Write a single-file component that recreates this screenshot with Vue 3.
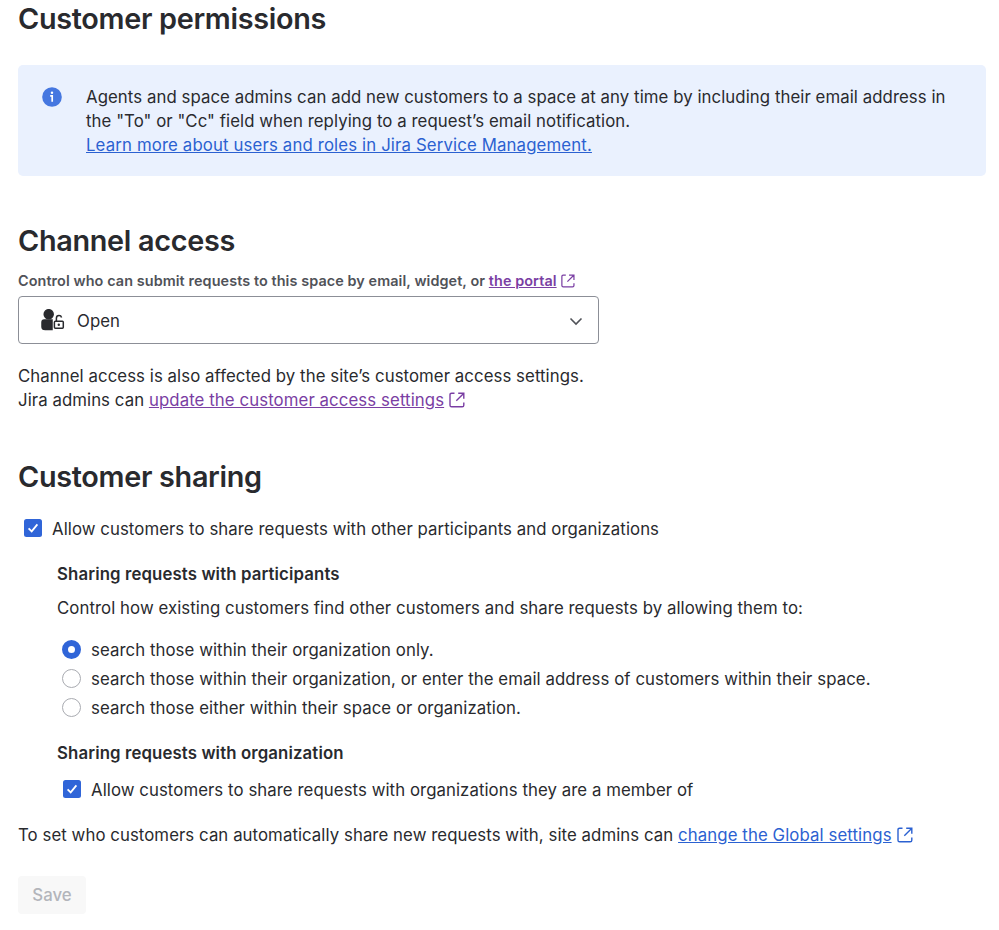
<template>
  <main class="permissions-page">
    <h2>Customer permissions</h2>

    <section class="info-message">
      <svg class="info-icon" viewBox="0 0 20 20">
        <circle cx="10" cy="10" r="9.8" fill="#4577e0" />
        <circle cx="10" cy="5.7" r="1.2" fill="#fff" />
        <path d="M8.2 8.9H10.2V14.8" fill="none" stroke="#fff" stroke-width="1.7" />
      </svg>
      <div class="info-content">
        <p>
          Agents and space admins can add new customers to a space at any time by including their email address in
          the "To" or "Cc" field when replying to a request’s email notification.
        </p>
        <a href="#" class="learn-more">Learn more about users and roles in Jira Service Management.</a>
      </div>
    </section>

    <!-- Channel access -->
    <section class="channel-access">
      <h2>Channel access</h2>
      <div class="field-label">
        Control who can submit requests to this space by email, widget, or
        <a href="#" class="visited">the portal</a>
        <svg class="external small visited" viewBox="0 0 16 16">
          <path :d="externalPath" />
        </svg>
      </div>
      <div class="select" role="combobox">
        <svg class="access-icon" viewBox="0 0 24 22">
          <circle cx="7.7" cy="5.2" r="4.5" fill="#292a2e" />
          <path d="M1 13.3Q1 11 3.3 11H11V20.5H4.2Q1 20.5 1 17.7Z" fill="#292a2e" />
          <rect x="13.4" y="12.3" width="8.9" height="6.9" rx="0.9" />
          <path d="M15.4 12V9.2Q15.4 6.6 18 6.6Q20 6.6 20.6 8.4" />
          <circle cx="17.8" cy="15.7" r="1.2" fill="#292a2e" stroke="none" />
        </svg>
        <span>{{ channelAccess }}</span>
        <svg class="chevron" viewBox="0 0 14 14">
          <path d="M1.5 4.5L7 10L12.5 4.5" />
        </svg>
      </div>
      <p class="access-note">
        Channel access is also affected by the site’s customer access settings.<br />
        Jira admins can
        <a href="#" class="visited">update the customer access settings</a>
        <svg class="external visited" viewBox="0 0 16 16">
          <path :d="externalPath" />
        </svg>
      </p>
    </section>

    <!-- Customer sharing -->
    <section class="customer-sharing">
      <h2>Customer sharing</h2>
      <label class="option">
        <input v-model="allowSharing" type="checkbox" />
        <svg class="box" viewBox="0 0 18 18">
          <path v-if="allowSharing" d="M4.6 9.3L7.7 12.4L13.4 5.4" />
        </svg>
        <span>Allow customers to share requests with other participants and organizations</span>
      </label>

      <div class="sharing-details">
        <h3>Sharing requests with participants</h3>
        <p>Control how existing customers find other customers and share requests by allowing them to:</p>
        <div class="radio-group">
          <label v-for="option in searchOptions" :key="option.value" class="option">
            <input v-model="searchScope" type="radio" name="scope" :value="option.value" />
            <span class="radio"></span>
            <span>{{ option.label }}</span>
          </label>
        </div>

        <h3>Sharing requests with organization</h3>
        <label class="option organization">
          <input v-model="allowOrganizations" type="checkbox" />
          <svg class="box" viewBox="0 0 18 18">
            <path v-if="allowOrganizations" d="M4.6 9.3L7.7 12.4L13.4 5.4" />
          </svg>
          <span>Allow customers to share requests with organizations they are a member of</span>
        </label>
      </div>

      <p class="global-note">
        To set who customers can automatically share new requests with, site admins can
        <a href="#">change the Global settings</a>
        <svg class="external" viewBox="0 0 16 16">
          <path :d="externalPath" />
        </svg>
      </p>
    </section>

    <button type="button" disabled>Save</button>
  </main>
</template>

<script setup>
import { ref } from 'vue'

const channelAccess = ref('Open')
const allowSharing = ref(true)
const allowOrganizations = ref(true)
const searchScope = ref('organization')

const searchOptions = [
  { value: 'organization', label: 'search those within their organization only.' },
  { value: 'email', label: 'search those within their organization, or enter the email address of customers within their space.' },
  { value: 'space', label: 'search those either within their space or organization.' }
]

const externalPath = 'M5.5 1.2H2.6Q1 1.2 1 2.8V13.2Q1 14.8 2.6 14.8H13.2Q14.8 14.8 14.8 13.2V10.5M9.2 1.2H14.8V6.8M14.6 1.4L7.3 8.7'
</script>

<style>
body {
  margin: 0;
  background: #fff;
}
</style>

<style scoped>
.permissions-page {
  box-sizing: border-box;
  height: 930px;
  padding: 2px 13.5px 0 18px;
  overflow: hidden;
  color: #292a2e;
  font-family: Inter, "Liberation Sans", sans-serif;
  font-size: 16.8px;
  line-height: 24px;
  letter-spacing: 0.064px;
}

h2,
h3,
p {
  margin: 0;
}

h2 {
  font-size: 28.8px;
  font-weight: 600;
  line-height: 34px;
  letter-spacing: -0.3px;
}

h3 {
  font-size: 16.8px;
  font-weight: 600;
  line-height: 24px;
  letter-spacing: 0.12px;
}

a {
  color: #2b61d1;
  letter-spacing: 0.09px;
  text-decoration: underline;
}

a.visited {
  color: #7a3ea3;
}

.learn-more {
  letter-spacing: 0.135px;
}

.info-message {
  display: flex;
  box-sizing: border-box;
  height: 111px;
  margin-top: 29px;
  padding: 20px 24px;
  border-radius: 5px;
  background: #eaf1fe;
}

.info-icon {
  flex: none;
  width: 20px;
  height: 20px;
  margin: 2px 24px 0 0;
}

.channel-access {
  margin-top: 48px;
}

.field-label {
  margin-top: 13px;
  color: #505258;
  font-size: 14.4px;
  font-weight: 600;
  line-height: 20px;
  letter-spacing: 0.09px;
}

.field-label a {
  letter-spacing: 0.08px;
}

.external {
  width: 16px;
  height: 16px;
  margin-left: 5px;
  vertical-align: -2px;
  fill: none;
  stroke: #2b61d1;
  stroke-width: 1.4;
}

.external.visited {
  stroke: #7a3ea3;
}

.external.small {
  width: 14px;
  height: 14px;
  margin-left: 4px;
  vertical-align: -2px;
}

.select {
  display: flex;
  align-items: center;
  box-sizing: border-box;
  width: 581px;
  height: 48px;
  margin-top: 5px;
  padding: 1px 15px 0 22px;
  border: 1px solid #8c8f97;
  border-radius: 4px;
}

.access-icon {
  width: 24px;
  height: 22px;
  margin: 0 12px 1px 0;
  fill: none;
  stroke: #292a2e;
  stroke-width: 1.5;
}

.chevron {
  width: 14px;
  height: 14px;
  margin-left: auto;
  fill: none;
  stroke: #505258;
  stroke-width: 1.6;
}

.access-note {
  margin-top: 20px;
}

.customer-sharing {
  margin-top: 48px;
}

.option {
  display: flex;
  align-items: center;
}

.option input {
  position: absolute;
  opacity: 0;
  pointer-events: none;
}

.customer-sharing > .option {
  margin-top: 23px;
  padding-left: 6px;
}

.box {
  flex: none;
  width: 18px;
  height: 18px;
  margin: 0 10px 2px 0;
  border-radius: 2.5px;
  background: #3065d8;
  fill: none;
  stroke: #fff;
  stroke-width: 1.8;
}

.sharing-details {
  margin-top: 21px;
  padding-left: 39px;
}

.sharing-details p {
  margin-top: 10px;
}

.radio-group {
  margin: 15px 0 19px;
  padding-left: 5px;
}

.radio-group .option {
  height: 29px;
}

.radio {
  flex: none;
  box-sizing: border-box;
  width: 19px;
  height: 19px;
  margin: 0 10px 1px 0;
  border: 1px solid #a9abb1;
  border-radius: 50%;
}

input:checked + .radio {
  border: 6px solid #3065d8;
}

.organization {
  margin-top: 13px;
  padding-left: 6px;
}

.global-note {
  margin-top: 21px;
}

button {
  width: 68px;
  height: 38px;
  margin-top: 29px;
  padding: 0;
  border: 0;
  border-radius: 4px;
  background: #f8f8f8;
  color: #b3b5bb;
  font: 500 16.8px/24px Inter, "Liberation Sans", sans-serif;
}
</style>
